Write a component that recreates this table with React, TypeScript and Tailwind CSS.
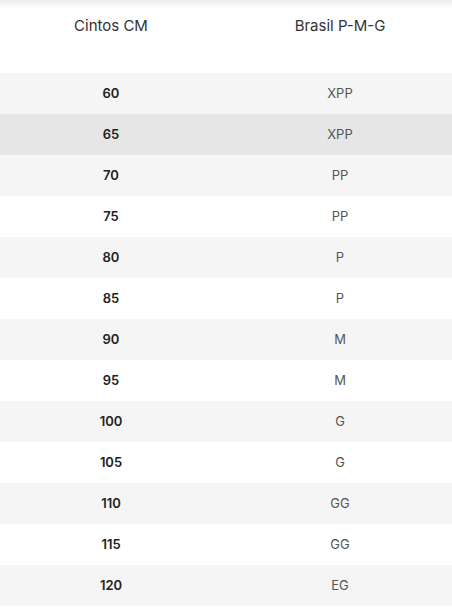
const rows: [string, string][] = [
  ['60', 'XPP'],
  ['65', 'XPP'],
  ['70', 'PP'],
  ['75', 'PP'],
  ['80', 'P'],
  ['85', 'P'],
  ['90', 'M'],
  ['95', 'M'],
  ['100', 'G'],
  ['105', 'G'],
  ['110', 'GG'],
  ['115', 'GG'],
  ['120', 'EG'],
];

export default function App() {
  return (
    <div className="w-[452px] h-[607px] bg-white overflow-hidden" style={{ fontFamily: 'Inter, "Liberation Sans", sans-serif' }}>
      <div className="h-[8px] bg-gradient-to-b from-[#ececec] to-white" />
      <div className="grid grid-cols-[222px_1fr] h-[65px] text-[15px] text-[#333] font-normal">
        <div className="text-center pt-[8px] leading-[20px]">Cintos CM</div>
        <div className="text-center pt-[8px] leading-[20px] pl-[6px]">Brasil P-M-G</div>
      </div>
      <div>
        {rows.map(([cm, size], i) => (
          <div key={cm}
            className={`grid grid-cols-[222px_1fr] h-[41px] items-center text-[13px] ${i === 1 ? 'bg-[#e6e6e6]' : i % 2 === 0 ? 'bg-[#f5f5f5]' : 'bg-white'}`}>
            <div className="text-center font-semibold text-[#222]">{cm}</div>
            <div className="text-center pl-[6px] text-[#555]">{size}</div>
          </div>
        ))}
      </div>
    </div>
  );
}
